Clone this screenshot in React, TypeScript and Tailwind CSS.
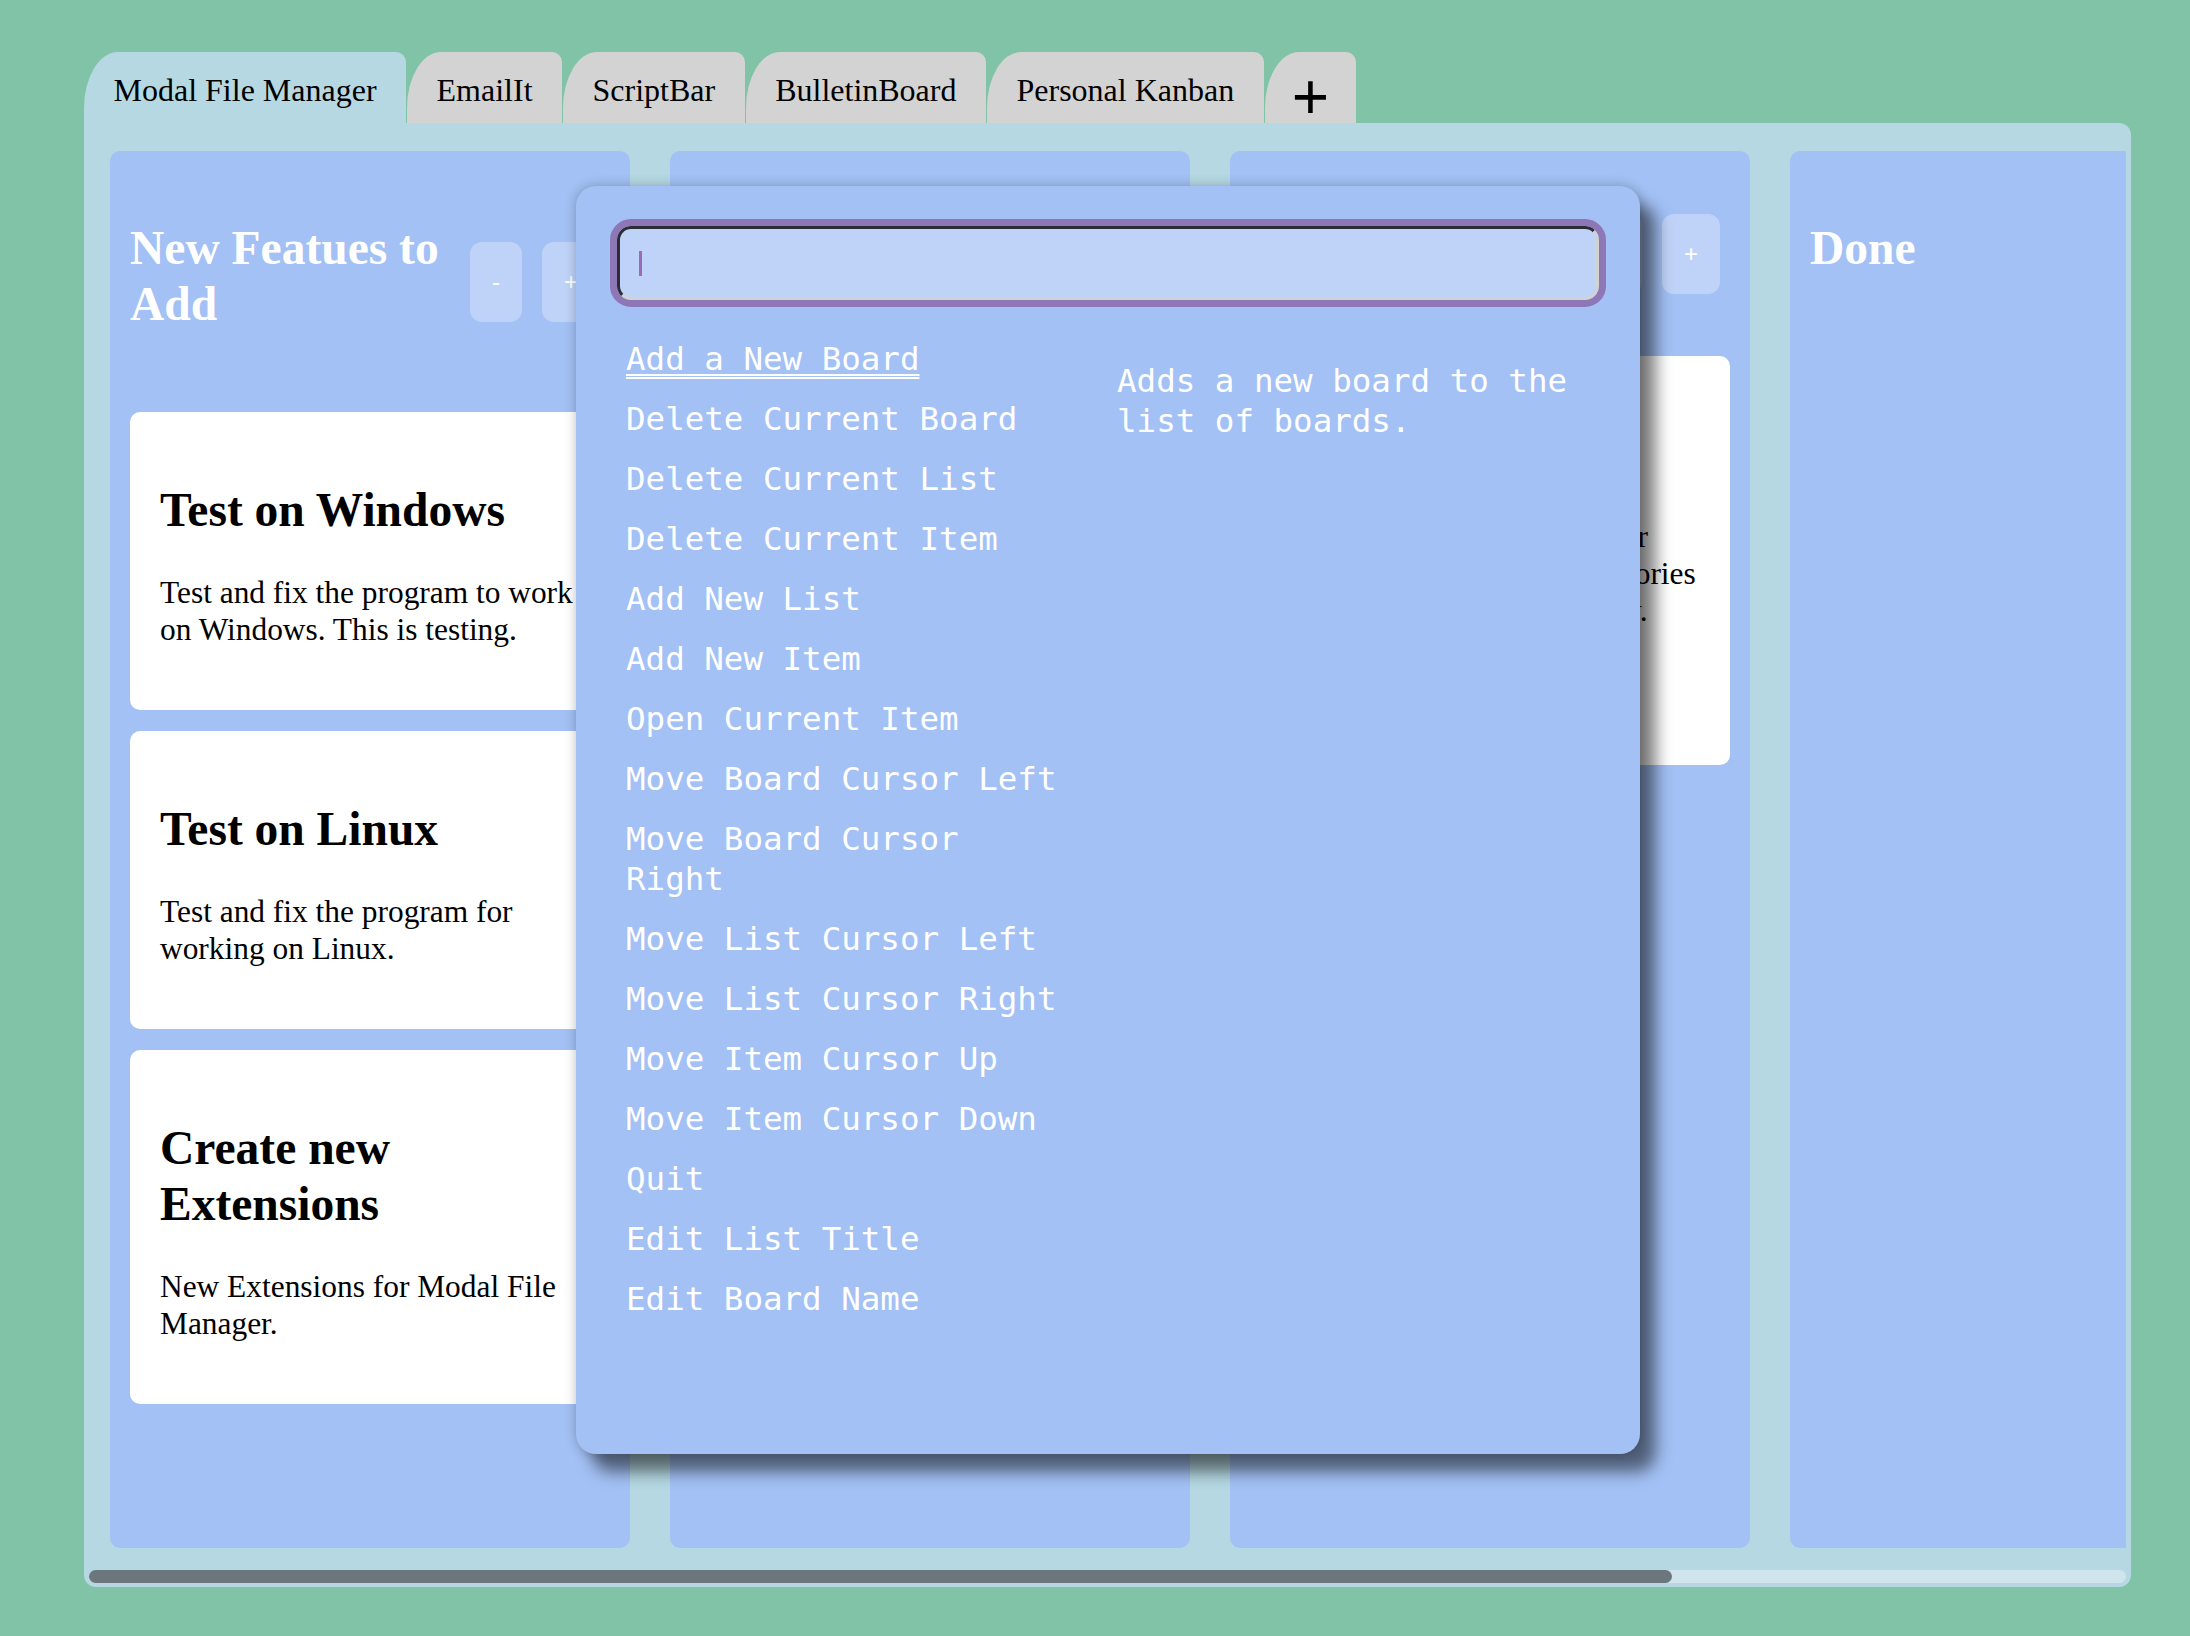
import React from "react";

interface Card {
  title: string;
  body: string;
}

interface Column {
  title: string;
  cards: Card[];
}

const tabs = [
  "Modal File Manager",
  "EmailIt",
  "ScriptBar",
  "BulletinBoard",
  "Personal Kanban",
];

const columns: Column[] = [
  {
    title: "New Featues to Add",
    cards: [
      {
        title: "Test on Windows",
        body: "Test and fix the program to work on Windows. This is testing.",
      },
      {
        title: "Test on Linux",
        body: "Test and fix the program for working on Linux.",
      },
      {
        title: "Create new Extensions",
        body: "New Extensions for Modal File Manager.",
      },
    ],
  },
  {
    title: "Working On",
    cards: [
      {
        title: "Fix Copy",
        body: "Copying large folders is slow.",
      },
    ],
  },
  {
    title: "In Progress",
    cards: [
      {
        title: "Bookmarks",
        body: "Add a Bookmarks feature for favorites and frequent directories so they can be found quickly. Also add a way to edit bookmarks.",
      },
    ],
  },
  {
    title: "Done",
    cards: [],
  },
];

const commands = [
  "Add a New Board",
  "Delete Current Board",
  "Delete Current List",
  "Delete Current Item",
  "Add New List",
  "Add New Item",
  "Open Current Item",
  "Move Board Cursor Left",
  "Move Board Cursor Right",
  "Move List Cursor Left",
  "Move List Cursor Right",
  "Move Item Cursor Up",
  "Move Item Cursor Down",
  "Quit",
  "Edit List Title",
  "Edit Board Name",
];

const BoardColumn: React.FC<{ column: Column }> = ({ column }) => {
  return (
    <div className="flex h-[1397px] w-[520px] shrink-0 flex-col rounded-[10px] bg-[#a3c1f5] px-[20px] pt-[29px]">
      <div className="flex items-center gap-[20px] pr-[10px]">
        <h2 className="my-[40px] min-w-0 flex-1 text-[47.5px] font-bold leading-[56px] text-white">
          {column.title}
        </h2>
        <button className="mt-[12px] h-[80px] shrink-0 rounded-[12px] bg-[#bfd3f8] px-[22px] font-['Liberation_Sans',sans-serif] text-[24px] text-white">
          -
        </button>
        <button className="mt-[12px] h-[80px] shrink-0 rounded-[12px] bg-[#bfd3f8] px-[22px] font-['Liberation_Sans',sans-serif] text-[24px] text-white">
          +
        </button>
      </div>
      <div className="mt-[40px] flex flex-col gap-[21px]">
        {column.cards.map((card) => (
          <div key={card.title} className="rounded-[10px] bg-white p-[30px] text-black">
            <h2 className="mb-[36px] mt-[40px] text-[47.5px] font-bold leading-[56px]">
              {card.title}
            </h2>
            <p className="mb-[32px] text-[31.4px] leading-[37px]">{card.body}</p>
          </div>
        ))}
      </div>
    </div>
  );
};

const CommandPalette: React.FC = () => {
  return (
    <div className="absolute left-[576px] top-[186px] h-[1268px] w-[1064px] rounded-[20px] bg-[#a3c1f5] font-['DejaVu_Sans_Mono',monospace] text-[32.5px] leading-[40px] text-white shadow-[16px_18px_16px_rgba(0,0,0,0.5),0_0_12px_rgba(0,0,0,0.25)]">
      <div className="mx-[41px] mt-[40px] flex h-[74px] items-center rounded-[14px] border-[3px] border-b-[#d2d2d2] border-l-[#2c2c34] border-r-[#d2d2d2] border-t-[#2c2c34] bg-[#bfd3f8] pl-[19px] outline-[7px] outline-solid outline-[#8e77b7]">
        <span className="h-[25px] w-[3px] bg-[#9b6cb6]" />
      </div>
      <div className="mt-[39px] flex gap-[51px] pl-[50px] pr-[40px]">
        <ul className="flex w-[440px] shrink-0 flex-col gap-[20px]">
          {commands.map((cmd, i) => (
            <li
              key={cmd}
              className={
                i === 0
                  ? "underline decoration-double decoration-[1.5px] underline-offset-[4px]"
                  : ""
              }
            >
              {cmd}
            </li>
          ))}
        </ul>
        <p className="mt-[22px] flex-1">Adds a new board to the list of boards.</p>
      </div>
    </div>
  );
};

export default function App() {
  return (
    <div className="relative min-h-screen w-full bg-[#80c3a7] pb-[49px] pt-[52px] font-['Liberation_Serif',serif] text-black">
      <div className="ml-[84px] flex gap-[1px]">
        {tabs.map((tab, i) => (
          <div
            key={tab}
            className={`flex h-[71px] items-center rounded-tl-[34px_56px] rounded-tr-[10px] px-[29.5px] pt-[4px] text-[32px] ${
              i === 0 ? "bg-[#b5d8e3]" : "bg-[#d3d3d3]"
            }`}
          >
            {tab}
          </div>
        ))}
        <div className="flex h-[71px] items-center rounded-tl-[34px_56px] rounded-tr-[10px] bg-[#d3d3d3] px-[27px] pt-[18px] font-['Liberation_Sans',sans-serif] text-[64px] leading-none">
          +
        </div>
      </div>

      <div className="ml-[84px] w-[2047px] rounded-b-[12px] rounded-tr-[12px] bg-[#b5d8e3] px-[5px] pb-[4px] pt-[28px]">
        <div className="overflow-hidden">
          <div className="flex w-max gap-[40px] pl-[21px]">
            {columns.map((column) => (
              <BoardColumn key={column.title} column={column} />
            ))}
          </div>
        </div>
        {/* horizontal scrollbar of the board strip */}
        <div className="mt-[22px] h-[13px] w-full rounded-full bg-[#cfe4ec]">
          <div className="h-full w-[1583px] rounded-full bg-[#6b777c]" />
        </div>
      </div>

      <CommandPalette />
    </div>
  );
}
